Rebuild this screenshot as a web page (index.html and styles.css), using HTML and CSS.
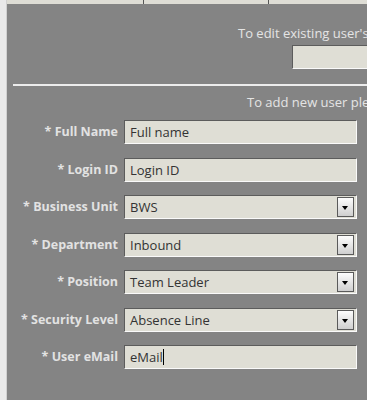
FILE: index.html
```html
<!DOCTYPE html>
<html lang="en">
<head>
  <meta charset="UTF-8">
  <title>User Maintenance</title>
  <link rel="stylesheet" href="styles.css">
</head>
<body>
  <div class="page">
    <div class="sidebar"></div>
    <div class="main">
      <div class="tabs">
        <span class="tab tab-first"></span>
        <span class="tab tab-second"></span>
        <span class="tab tab-third"></span>
      </div>

      <p class="note edit-note">To edit existing user's details please select the user</p>
      <div class="edit-box"><input type="text" class="field edit-field"></div>

      <hr class="divider">

      <p class="note add-note">To add new user please fill in the details below</p>

      <div class="user-form">
        <div class="row">
          <label for="fullName">* Full Name</label>
          <input type="text" id="fullName" class="field" value="Full name">
        </div>
        <div class="row">
          <label for="loginId">* Login ID</label>
          <input type="text" id="loginId" class="field" value="Login ID">
        </div>
        <div class="row">
          <label>* Business Unit</label>
          <div class="field combo"><span class="combo-text">BWS</span><span class="combo-btn"></span></div>
        </div>
        <div class="row">
          <label>* Department</label>
          <div class="field combo"><span class="combo-text">Inbound</span><span class="combo-btn"></span></div>
        </div>
        <div class="row">
          <label>* Position</label>
          <div class="field combo"><span class="combo-text">Team Leader</span><span class="combo-btn"></span></div>
        </div>
        <div class="row">
          <label>* Security Level</label>
          <div class="field combo"><span class="combo-text">Absence Line</span><span class="combo-btn"></span></div>
        </div>
        <div class="row">
          <label for="email">* User eMail</label>
          <div class="field email"><span>eMail</span><span class="caret"></span></div>
        </div>
      </div>
    </div>
  </div>
</body>
</html>
```

FILE: styles.css
```css
body {
  margin: 0;
  font-family: "Open Sans", "Noto Sans", sans-serif;
  font-size: 12px;
  background: #848484;
}
.page {
  display: flex;
  height: 400px;
  overflow: hidden;
}
.sidebar {
  width: 7px;
  flex: none;
  background: #e9e9e9;
  border-right: 1px solid #d0d0d0;
  box-sizing: border-box;
}
.main {
  flex: 1;
  min-width: 0;
  overflow: hidden;
  background: #848484;
}
.tabs {
  display: flex;
  height: 4px;
  background: #deddd5;
}
.tab {
  height: 4px;
}
.tab-first {
  width: 136px;
  border-right: 1px solid #555;
}
.tab-second {
  width: 124px;
  border-right: 1px solid #555;
}
.note {
  margin: 0;
  white-space: nowrap;
  color: #e4e4e4;
  font-size: 13px;
  line-height: 18px;
}
.edit-note {
  margin-top: 20px;
  padding-left: 231px;
}
.edit-box {
  margin-top: 3px;
  padding-left: 285px;
}
.edit-field {
  display: block;
  width: 120px;
  height: 21px;
}
.divider {
  margin: 15px 0 0 6px;
  height: 2px;
  border: none;
  background: #ececec;
}
.add-note {
  margin-top: 7px;
  padding-left: 240px;
}
.user-form {
  margin-top: 9px;
  display: flex;
  flex-direction: column;
  gap: 13.5px;
}
.row {
  display: flex;
  align-items: center;
  gap: 6px;
}
.row label {
  width: 111px;
  flex: none;
  text-align: right;
  font-weight: bold;
  color: #e2e2e2;
  font-size: 12.5px;
  line-height: 18px;
  white-space: nowrap;
}
.field {
  box-sizing: border-box;
  width: 233px;
  height: 24px;
  margin: 0;
  padding: 0 5px;
  font-family: inherit;
  font-size: 13px;
  color: #333;
  background: #dfded5;
  border: 1px solid;
  border-color: #5c5c5c #fafafa #fafafa #5c5c5c;
  outline: none;
}
.combo {
  display: flex;
  align-items: center;
  justify-content: space-between;
  padding-right: 2px;
}
.combo-text {
  line-height: 20px;
}
.combo-btn {
  position: relative;
  width: 17px;
  height: 20px;
  box-sizing: border-box;
  border: 1px solid #5a5a5a;
  background: linear-gradient(#fdfdfd, #cfcfcf);
}
.combo-btn::after {
  content: "";
  position: absolute;
  left: 4px;
  top: 8px;
  border-left: 3.5px solid transparent;
  border-right: 3.5px solid transparent;
  border-top: 4px solid #000;
}
.email {
  display: flex;
  align-items: center;
}
.caret {
  width: 1px;
  height: 16px;
  background: #000;
}
```
